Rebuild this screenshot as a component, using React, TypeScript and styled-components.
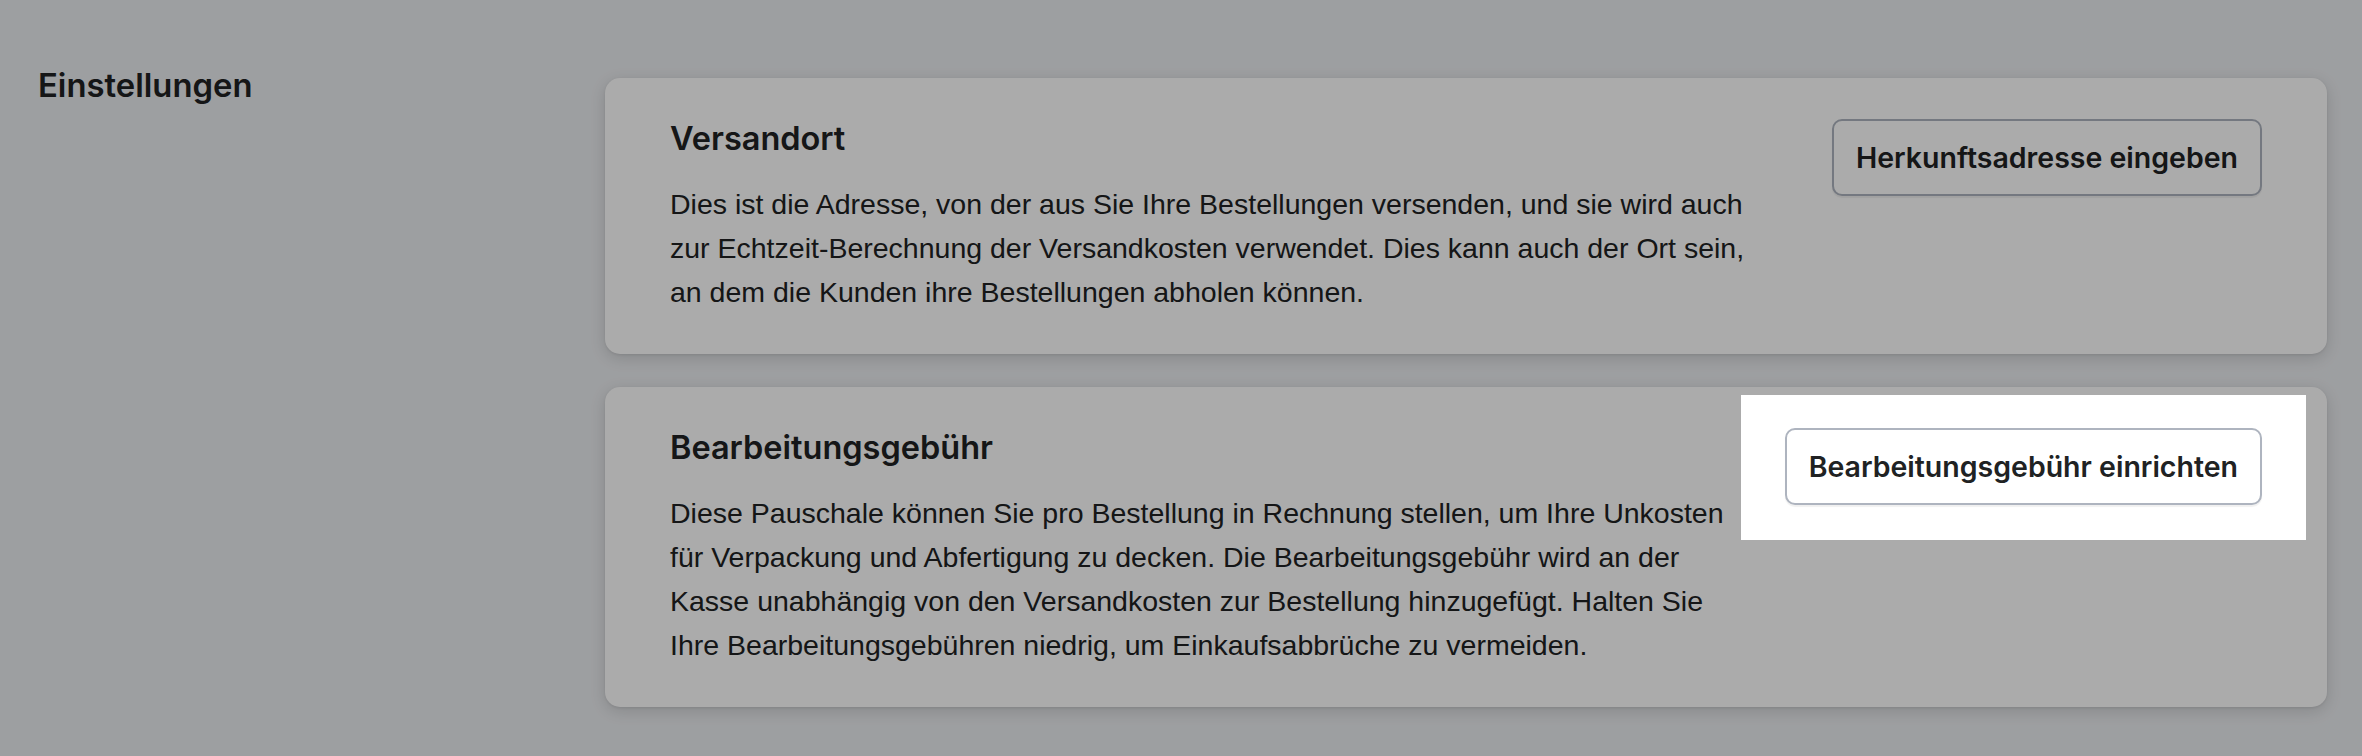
import styled, { createGlobalStyle } from "styled-components";

const GlobalStyle = createGlobalStyle`
  html, body {
    margin: 0;
    padding: 0;
    background-color: #ebedf0;
    color: #202223;
    font-family: "Liberation Sans", Arial, sans-serif;
  }
  #root {
    min-height: 100vh;
  }
`;

const Layout = styled.div`
  display: grid;
  grid-template-columns: 567px 1fr;
  padding: 65px 35px 0 38px;
  box-sizing: border-box;
  min-height: 100vh;
`;

const SectionTitle = styled.h2`
  margin: 0;
  font-family: "Inter", sans-serif;
  font-weight: 600;
  font-size: 32.8px;
  line-height: 40px;
`;

const CardList = styled.div`
  padding-top: 13px;
  display: flex;
  flex-direction: column;
  row-gap: 33px;
`;

const Card = styled.section`
  background-color: #ffffff;
  border-radius: 15px;
  padding: 41px 65px 40px;
  box-shadow: 0 4px 16px rgba(0, 0, 0, 0.14), 0 1px 3px rgba(0, 0, 0, 0.08);
  display: flex;
  align-items: flex-start;
  justify-content: space-between;
  column-gap: 48px;
`;

const CardText = styled.div`
  flex: 1;
  min-width: 0;
  max-width: 1085px;
`;

const CardTitle = styled.h3`
  margin: 0 0 23px;
  font-family: "Inter", sans-serif;
  font-weight: 600;
  font-size: 32.5px;
  line-height: 40px;
`;

const CardBody = styled.p`
  margin: 0;
  font-size: 28.5px;
  line-height: 44px;
`;

// dims the whole page except a box around the wrapped element
const Spotlight = styled.div<{ active?: boolean }>`
  position: relative;
  flex-shrink: 0;
  &::before {
    content: "";
    display: ${({ active }) => (active ? "block" : "none")};
    position: absolute;
    top: -33px;
    right: -44px;
    bottom: -35px;
    left: -44px;
    box-shadow: 0 0 0 9999px rgba(0, 0, 0, 0.33);
    pointer-events: none;
    z-index: 10;
  }
`;

const Button = styled.button`
  display: block;
  height: 77px;
  padding: 0 22px;
  border: 2px solid #aeb4bf;
  border-radius: 10px;
  background-color: #ffffff;
  box-shadow: 0 2px 1px rgba(0, 0, 0, 0.06);
  color: #202223;
  font-family: "Inter", sans-serif;
  font-weight: 600;
  font-size: 28.5px;
  white-space: nowrap;
  cursor: pointer;
`;

type SettingItem = {
  id: string;
  title: string;
  text: string;
  action: string;
  highlighted?: boolean;
};

const settings: SettingItem[] = [
  {
    id: "origin",
    title: "Versandort",
    text: "Dies ist die Adresse, von der aus Sie Ihre Bestellungen versenden, und sie wird auch zur Echtzeit-Berechnung der Versandkosten verwendet. Dies kann auch der Ort sein, an dem die Kunden ihre Bestellungen abholen können.",
    action: "Herkunftsadresse eingeben",
  },
  {
    id: "fee",
    title: "Bearbeitungsgebühr",
    text: "Diese Pauschale können Sie pro Bestellung in Rechnung stellen, um Ihre Unkosten für Verpackung und Abfertigung zu decken. Die Bearbeitungsgebühr wird an der Kasse unabhängig von den Versandkosten zur Bestellung hinzugefügt. Halten Sie Ihre Bearbeitungsgebühren niedrig, um Einkaufsabbrüche zu vermeiden.",
    action: "Bearbeitungsgebühr einrichten",
    highlighted: true,
  },
];

const App = () => {
  return (
    <>
      <GlobalStyle />
      <Layout>
        <SectionTitle>Einstellungen</SectionTitle>
        <CardList>
          {settings.map(({ id, title, text, action, highlighted }) => (
            <Card key={id}>
              <CardText>
                <CardTitle>{title}</CardTitle>
                <CardBody>{text}</CardBody>
              </CardText>
              <Spotlight active={highlighted}>
                <Button type="button">{action}</Button>
              </Spotlight>
            </Card>
          ))}
        </CardList>
      </Layout>
    </>
  );
};

export default App;
